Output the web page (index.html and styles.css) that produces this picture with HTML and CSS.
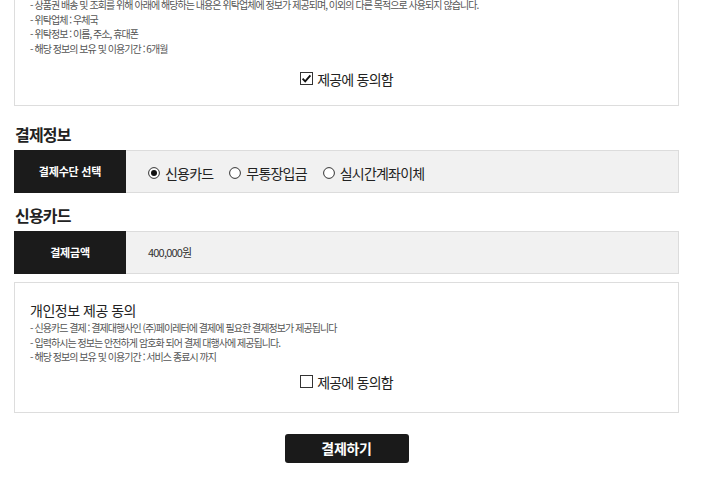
FILE: index.html
```html
<!DOCTYPE html>
<html lang="ko">
<head>
    <meta charset="UTF-8">
    <meta name="viewport" content="width=device-width, initial-scale=1.0">
    <title>결제</title>
    <link rel="stylesheet" href="styles.css">
</head>
<body>
    <div class="wrap">
        <div class="agree-box cut">
            <ul class="notes">
                <li>- 상품권 배송 및 조회를 위해 아래에 해당하는 내용은 위탁업체에 정보가 제공되며, 이외의 다른 목적으로 사용되지 않습니다.</li>
                <li>- 위탁업체 : 우체국</li>
                <li>- 위탁정보 : 이름, 주소, 휴대폰</li>
                <li>- 해당 정보의 보유 및 이용기간 : 6개월</li>
            </ul>
            <label class="agree">
                <svg class="box" width="13" height="13" viewBox="0 0 13 13"><rect x="0.5" y="0.5" width="12" height="12" fill="#fff" stroke="#333"/><path d="M2.6 6.6 L5.2 9.3 L10.4 3.4" fill="none" stroke="#111" stroke-width="1.9"/></svg>
                제공에 동의함
            </label>
        </div>

        <h2 class="sec-title">결제정보</h2>
        <div class="row">
            <div class="row-head">결제수단 선택</div>
            <div class="row-body radios">
                <label class="radio"><svg width="12" height="12" viewBox="0 0 12 12"><circle cx="6" cy="6" r="5.4" fill="#fff" stroke="#333"/><circle cx="6" cy="6" r="3" fill="#111"/></svg>신용카드</label>
                <label class="radio"><svg width="12" height="12" viewBox="0 0 12 12"><circle cx="6" cy="6" r="5.4" fill="#fff" stroke="#333"/></svg>무통장입금</label>
                <label class="radio"><svg width="12" height="12" viewBox="0 0 12 12"><circle cx="6" cy="6" r="5.4" fill="#fff" stroke="#333"/></svg>실시간계좌이체</label>
            </div>
        </div>

        <h2 class="sec-title">신용카드</h2>
        <div class="row">
            <div class="row-head">결제금액</div>
            <div class="row-body price">400,000원</div>
        </div>

        <div class="agree-box card">
            <h3 class="agree-title">개인정보 제공 동의</h3>
            <ul class="notes">
                <li>- 신용카드 결제 : 결제대행사인 (주)페이레터에 결제에 필요한 결제정보가 제공됩니다</li>
                <li>- 입력하시는 정보는 안전하게 암호화 되어 결제 대행사에 제공됩니다.</li>
                <li>- 해당 정보의 보유 및 이용기간 : 서비스 종료시 까지</li>
            </ul>
            <label class="agree">
                <svg class="box" width="13" height="13" viewBox="0 0 13 13"><rect x="0.5" y="0.5" width="12" height="12" fill="#fff" stroke="#333"/></svg>
                제공에 동의함
            </label>
        </div>

        <div class="actions">
            <button type="button" class="pay-btn">결제하기</button>
        </div>
    </div>
</body>
</html>
```

FILE: styles.css
```css
body {
    margin: 0;
    background-color: #fff;
    font-family: "Noto Sans CJK KR", "Noto Sans", sans-serif;
    color: #222;
    letter-spacing: -0.05em;
}
.wrap {
    width: 665px;
    margin-left: 14px;
}
.agree-box {
    border: 1px solid #ddd;
    padding: 0 15px 16px;
}
.agree-box.cut {
    margin-top: -3px;
}
.agree-box.card {
    margin-top: 8px;
    padding-top: 19px;
    padding-bottom: 20px;
}
.agree-title {
    margin: 0;
    font-size: 14px;
    font-weight: 400;
    line-height: 16px;
    letter-spacing: -0.035em;
    color: #222;
}
.notes {
    list-style: none;
    margin: 0;
    padding: 0;
    font-size: 10px;
    line-height: 14.7px;
    letter-spacing: -0.095em;
    color: #555;
}
.card .notes {
    margin-top: 3px;
}
.agree {
    display: flex;
    justify-content: center;
    align-items: center;
    gap: 4px;
    margin-top: 12px;
    height: 20px;
    font-size: 14px;
    color: #222;
}
.card .agree {
    margin-top: 7px;
}
.sec-title {
    margin: 17px 0 5px 1px;
    font-size: 16px;
    font-weight: 700;
    line-height: 22px;
    color: #222;
}
.sec-title + .row + .sec-title {
    margin-top: 11px;
}
.row {
    display: flex;
    height: 43px;
}
.row-head {
    width: 112px;
    flex: none;
    display: flex;
    align-items: center;
    justify-content: center;
    background-color: #1b1b1b;
    color: #fff;
    font-size: 11px;
    font-weight: 700;
    letter-spacing: -0.02em;
}
.row-body {
    flex: 1;
    display: flex;
    align-items: center;
    gap: 16px;
    padding-left: 22px;
    background-color: #f1f1f1;
    border: 1px solid #dcdcdc;
    border-left: none;
}
.radios {
    padding-top: 3px;
}
.radio {
    display: flex;
    align-items: center;
    gap: 5px;
    font-size: 14px;
    color: #222;
}
.price {
    font-size: 11px;
    color: #333;
}
.actions {
    display: flex;
    justify-content: center;
    margin-top: 21px;
}
.pay-btn {
    width: 124px;
    height: 29px;
    background-color: #1a1a1a;
    color: #fff;
    border: none;
    border-radius: 3px;
    font-family: inherit;
    font-size: 14px;
    font-weight: 700;
    letter-spacing: -0.02em;
    cursor: pointer;
}
```
